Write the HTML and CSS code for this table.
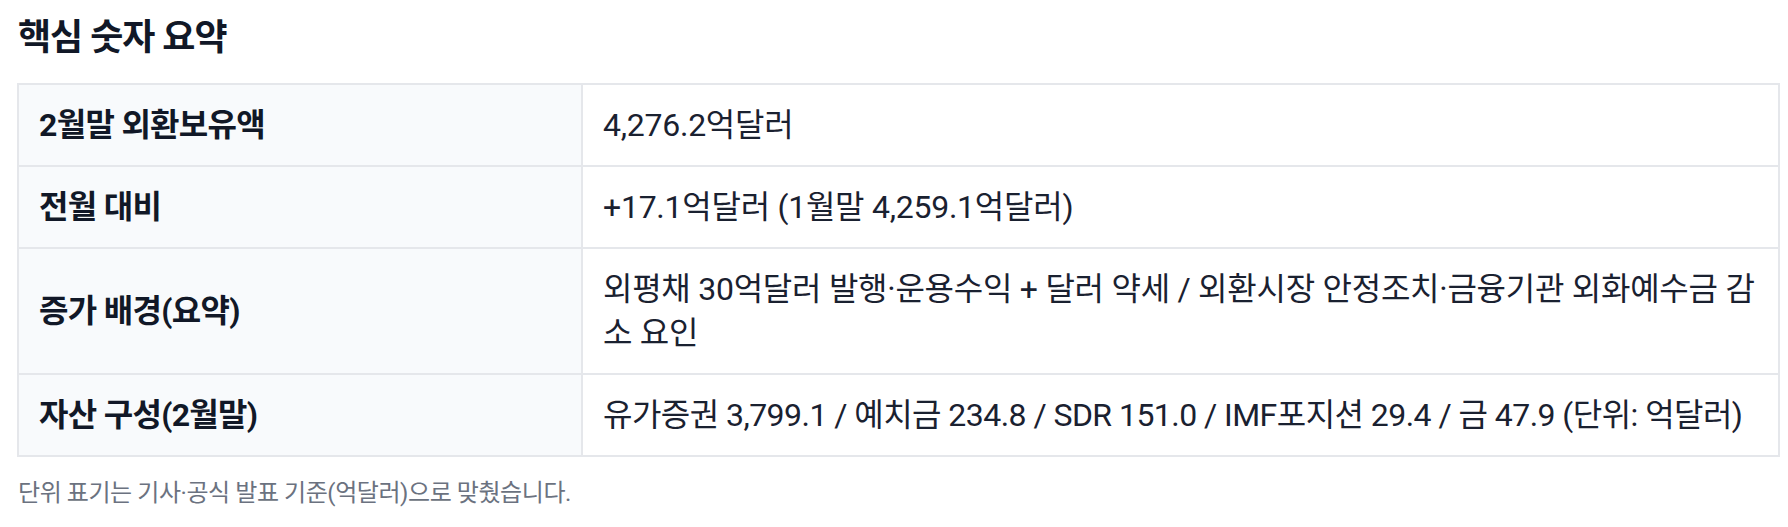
FILE: index.html
```html
<!DOCTYPE html>
<html lang="ko">
<head>
<meta charset="utf-8">
<title>핵심 숫자 요약</title>
<link rel="stylesheet" href="styles.css">
</head>
<body>
<section class="summary">
  <h2 class="summary-title">핵심 숫자 요약</h2>
  <table class="summary-table">
    <tbody>
      <tr>
        <th class="label">2월말 외환보유액</th>
        <td class="value">4,276.2억달러</td>
      </tr>
      <tr>
        <th class="label">전월 대비</th>
        <td class="value">+17.1억달러 (1월말 4,259.1억달러)</td>
      </tr>
      <tr>
        <th class="label">증가 배경(요약)</th>
        <td class="value">외평채 30억달러 발행·운용수익 + 달러 약세 / 외환시장 안정조치·금융기관 외화예수금 감소 요인</td>
      </tr>
      <tr>
        <th class="label">자산 구성(2월말)</th>
        <td class="value value--dense">유가증권 3,799.1 / 예치금 234.8 / SDR 151.0 / IMF포지션 29.4 / 금 47.9 (단위: 억달러)</td>
      </tr>
    </tbody>
  </table>
  <p class="summary-note">단위 표기는 기사·공식 발표 기준(억달러)으로 맞췄습니다.</p>
</section>
</body>
</html>
```

FILE: styles.css
```css
html, body {
  margin: 0;
  padding: 0;
  background: #ffffff;
}

body {
  font-family: Roboto, "Noto Sans CJK KR", "Noto Sans", sans-serif;
  color: #111827;
  letter-spacing: -0.016em;
}

.summary {
  padding: 16px 8px 0 17px;
}

.summary-title {
  margin: 0 0 0 1px;
  font-size: 36px;
  line-height: 44px;
  font-weight: 700;
  color: #111827;
  letter-spacing: -0.028em;
}

.summary-table {
  margin-top: 23px;
  width: 1763px;
  border-collapse: collapse;
  table-layout: fixed;
  font-size: 32px;
  line-height: 44px;
}

.summary-table th,
.summary-table td {
  border: 2px solid #e5e7eb;
  padding: 18px 20px;
  text-align: left;
  vertical-align: middle;
}

.summary-table .label {
  width: 522px;
  background: #f8fafc;
  font-weight: 700;
  color: #111827;
  letter-spacing: -0.022em;
}

.summary-table .value {
  background: #ffffff;
  font-weight: 400;
  color: #1a2130;
}

.summary-table .value--dense {
  letter-spacing: -0.017em;
}

.summary-note {
  margin: 20px 0 0 1px;
  font-size: 24px;
  line-height: 32px;
  color: #6b7280;
  letter-spacing: -0.018em;
}
```
